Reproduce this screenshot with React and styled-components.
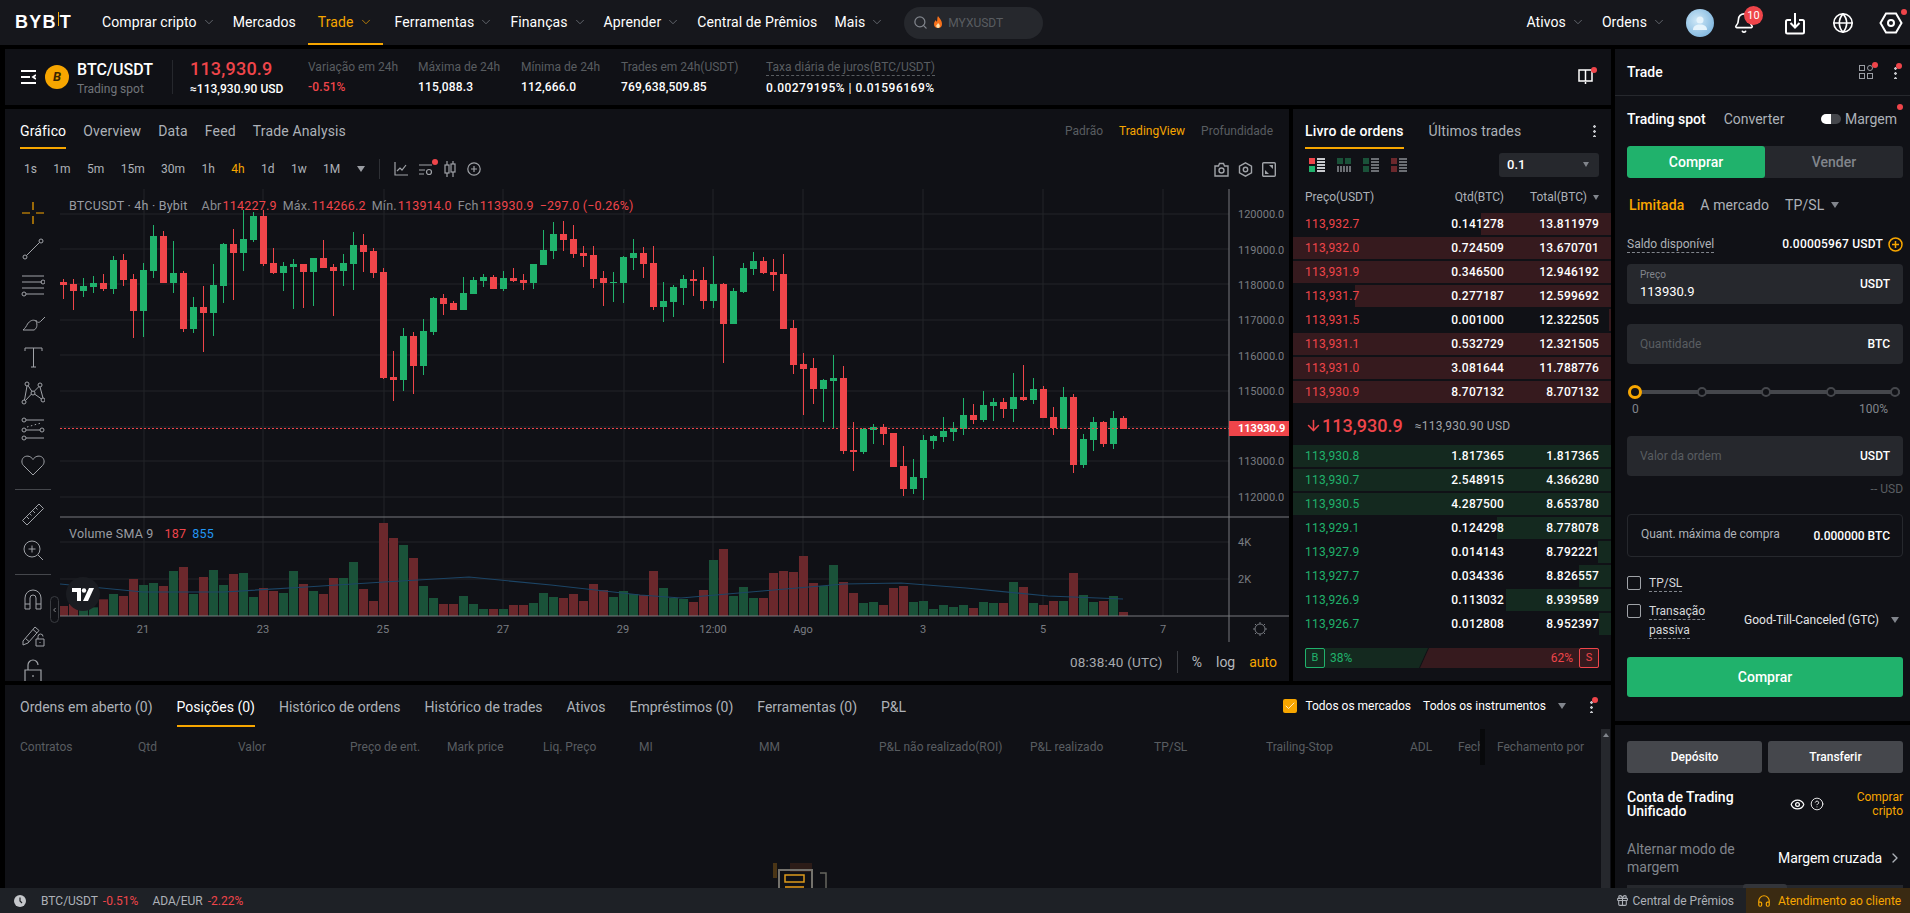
import styled, { createGlobalStyle } from "styled-components";
import { Search, Bell, Globe, Eye, CircleHelp, ChevronRight, Headphones, Gift, ChevronDown, ChevronLeft, Check, ArrowDown } from "lucide-react";

const GlobalStyle = createGlobalStyle`
  html, body {
    margin: 0;
    padding: 0;
    background: #000;
    overflow: hidden;
  }
  * {
    box-sizing: border-box;
  }
  body {
    font-family: "Roboto", "Liberation Sans", sans-serif;
    font-size: 12px;
    color: #fff;
  }
`;

// [up, bodyTop, bodyBottom, wickTop, wickBottom] read from the chart, y in 1/3 px from 180
const CANDLES = [
  [0, 305, 315, 297, 357], [0, 312, 332, 297, 390], [1, 318, 332, 294, 350], [1, 309, 321, 288, 338],
  [0, 309, 327, 282, 333], [1, 240, 327, 228, 342], [0, 240, 300, 222, 318], [0, 297, 393, 282, 474],
  [1, 270, 393, 250, 471], [1, 168, 273, 135, 294], [0, 168, 309, 153, 309], [1, 279, 309, 183, 339],
  [0, 279, 447, 273, 456], [1, 381, 447, 351, 459], [0, 381, 399, 318, 516], [1, 315, 399, 252, 468],
  [1, 192, 318, 189, 369], [0, 192, 219, 147, 360], [1, 177, 219, 90, 273], [1, 109, 180, 95, 186],
  [0, 109, 252, 90, 258], [0, 249, 279, 204, 282], [1, 258, 279, 246, 333], [1, 252, 261, 237, 387],
  [0, 252, 276, 252, 384], [1, 234, 276, 234, 378], [0, 234, 264, 180, 264], [0, 261, 273, 252, 408],
  [1, 249, 273, 222, 318], [1, 195, 252, 156, 330], [0, 195, 216, 162, 276], [0, 213, 279, 204, 294],
  [0, 276, 594, 264, 597], [0, 591, 600, 513, 663], [1, 468, 600, 444, 633], [0, 468, 558, 456, 642],
  [1, 453, 558, 417, 585], [1, 354, 456, 351, 465], [0, 354, 372, 342, 405], [0, 369, 390, 363, 390],
  [1, 339, 390, 291, 390], [1, 300, 342, 291, 342], [1, 291, 303, 282, 321], [0, 291, 327, 285, 327],
  [1, 294, 327, 273, 333], [0, 294, 303, 264, 306], [0, 300, 309, 282, 330], [1, 252, 309, 252, 327],
  [1, 210, 255, 150, 255], [1, 162, 213, 126, 237], [0, 162, 180, 123, 213], [0, 177, 222, 135, 234],
  [0, 219, 228, 198, 261], [0, 225, 297, 198, 324], [0, 294, 309, 273, 378], [1, 306, 309, 276, 366],
  [1, 231, 309, 228, 369], [1, 219, 234, 177, 270], [0, 219, 252, 201, 294], [0, 249, 381, 198, 390],
  [1, 363, 381, 306, 426], [1, 321, 366, 315, 411], [1, 297, 324, 285, 375], [0, 297, 303, 270, 348],
  [0, 300, 363, 261, 387], [1, 312, 363, 228, 384], [0, 312, 432, 309, 549], [1, 333, 432, 324, 432],
  [1, 264, 336, 249, 339], [1, 243, 267, 216, 285], [0, 243, 279, 231, 282], [0, 276, 285, 237, 333],
  [0, 282, 447, 222, 447], [0, 444, 555, 420, 582], [0, 552, 567, 519, 705], [0, 564, 627, 534, 672],
  [1, 600, 627, 597, 726], [1, 594, 603, 525, 744], [0, 594, 813, 558, 822], [0, 810, 816, 726, 873],
  [1, 747, 816, 744, 822], [1, 741, 750, 732, 792], [0, 741, 762, 732, 795], [0, 759, 861, 759, 861],
  [0, 858, 927, 798, 948], [1, 891, 927, 837, 942], [1, 780, 894, 765, 960], [1, 768, 783, 765, 807],
  [1, 753, 771, 711, 786], [1, 744, 756, 726, 783], [1, 705, 747, 654, 765], [0, 705, 720, 672, 732],
  [1, 675, 720, 633, 726], [1, 666, 678, 654, 723], [0, 666, 687, 654, 714], [1, 651, 687, 579, 726],
  [0, 651, 660, 555, 663], [1, 627, 660, 594, 672], [0, 627, 714, 618, 714], [0, 711, 744, 681, 765],
  [1, 651, 747, 621, 747], [0, 651, 855, 642, 879], [1, 777, 855, 762, 864], [1, 726, 780, 711, 813],
  [0, 726, 792, 723, 801], [1, 714, 792, 693, 807], [0, 714, 747, 708, 747],
];

const VOLUMES = [
  1278, 1272, 1290, 1282, 1258, 1242, 1248, 1197, 1215, 1209, 1218, 1173, 1161, 1242, 1191, 1170, 1215, 1182,
  1179, 1251, 1224, 1233, 1239, 1173, 1212, 1233, 1242, 1194, 1194, 1146, 1227, 1263, 1029, 1074, 1095, 1134,
  1218, 1254, 1272, 1272, 1248, 1272, 1287, 1287, 1287, 1275, 1275, 1269, 1239, 1251, 1254, 1242, 1263, 1212,
  1230, 1251, 1233, 1242, 1245, 1173, 1224, 1254, 1257, 1266, 1230, 1140, 1107, 1248, 1221, 1254, 1254, 1179,
  1173, 1176, 1128, 1209, 1218, 1155, 1206, 1239, 1269, 1266, 1275, 1224, 1218, 1266, 1263, 1287, 1275, 1281,
  1275, 1284, 1266, 1269, 1269, 1206, 1221, 1269, 1275, 1263, 1263, 1179, 1245, 1266, 1263, 1248, 1296,
];

const SMA_POINTS = "60,584 143,592 224,592 306,587 384,582 469,577 551,585 640,595 681,598 762,591 844,584 901,583 966,588 1048,596 1123,599";
const H_LINES = [214, 249, 284, 320, 355, 391, 427, 461, 497, 542, 579];
const V_LINES = [144, 263, 384, 503, 624, 713, 803, 923, 1043, 1163];
const PRICE_LABELS = [
  ["120000.0", 214], ["119000.0", 250], ["118000.0", 285], ["117000.0", 320],
  ["116000.0", 356], ["115000.0", 391], ["113000.0", 461], ["112000.0", 497],
];
const TIME_LABELS = [
  ["21", 143], ["23", 263], ["25", 383], ["27", 503], ["29", 623],
  ["12:00", 713], ["Ago", 803], ["3", 923], ["5", 1043], ["7", 1163],
];

const NAV = [
  ["Comprar cripto", true], ["Mercados", false], ["Trade", true, true], ["Ferramentas", true],
  ["Finanças", true], ["Aprender", true], ["Central de Prêmios", false], ["Mais", true],
];

const ASKS = [
  ["113,932.7", "0.141278", "13.811979", 41], ["113,932.0", "0.724509", "13.670701", 100],
  ["113,931.9", "0.346500", "12.946192", 100], ["113,931.7", "0.277187", "12.599692", 80.5],
  ["113,931.5", "0.001000", "12.322505", 0.6], ["113,931.1", "0.532729", "12.321505", 100],
  ["113,931.0", "3.081644", "11.788776", 100], ["113,930.9", "8.707132", "8.707132", 100],
];

const BIDS = [
  ["113,930.8", "1.817365", "1.817365", 100], ["113,930.7", "2.548915", "4.366280", 100],
  ["113,930.5", "4.287500", "8.653780", 100], ["113,929.1", "0.124298", "8.778078", 36],
  ["113,927.9", "0.014143", "8.792221", 4], ["113,927.7", "0.034336", "8.826557", 10],
  ["113,926.9", "0.113032", "8.939589", 33], ["113,926.7", "0.012808", "8.952397", 3.8],
];

const TIMEFRAMES = ["1s", "1m", "5m", "15m", "30m", "1h", "4h", "1d", "1w", "1M"];
const BOTTOM_TABS = [
  "Ordens em aberto (0)", "Posições (0)", "Histórico de ordens", "Histórico de trades",
  "Ativos", "Empréstimos (0)", "Ferramentas (0)", "P&L",
];
const COLUMNS = [
  "Contratos", "Qtd", "Valor", "Preço de ent.", "Mark price", "Liq. Preço", "MI", "MM",
  "P&L não realizado(ROI)", "P&L realizado", "TP/SL", "Trailing-Stop", "ADL", "Fech", "Fechamento por",
];

const cy = (z) => 180 + z / 3;

const PriceChart = () => (
  <ChartSvg viewBox="60 189 1229 454">
    {H_LINES.map((y) => (
      <line key={y} x1="60" x2="1229" y1={y} y2={y} stroke="#222429" />
    ))}
    {V_LINES.map((x) => (
      <line key={x} x1={x} x2={x} y1="189" y2="616" stroke="#222429" />
    ))}
    {VOLUMES.map((top, i) => (
      <rect
        key={i}
        x={59 + 10 * i}
        y={cy(top)}
        width="9"
        height={616 - cy(top)}
        fill={CANDLES[i][0] ? "#1a5239" : "#6b282c"}
      />
    ))}
    <polyline points={SMA_POINTS} fill="none" stroke="#1c4566" strokeWidth="1.200" />
    {CANDLES.map(([up, top, bottom, wickTop, wickBottom], i) => {
      const color = up ? "#20b26c" : "#ef454a";
      const x = 63 + 10 * i;
      return (
        <g key={i} shapeRendering="crispEdges">
          <rect x={x} y={cy(wickTop)} width="1" height={cy(wickBottom) - cy(wickTop)} fill={color} />
          <rect x={x - 3} y={cy(top)} width="7" height={Math.max(cy(bottom) - cy(top), 1)} fill={color} />
        </g>
      );
    })}
    <line x1="60" x2="1229" y1="428" y2="428" stroke="#ef454a" strokeDasharray="2 2" shapeRendering="crispEdges" />
    <line x1="60" x2="1289" y1="517" y2="517" stroke="#77797d" />
    <line x1="60" x2="1289" y1="616" y2="616" stroke="#77797d" />
    <line x1="1229" x2="1229" y1="189" y2="642" stroke="#77797d" />
    {PRICE_LABELS.map(([label, y]) => (
      <AxisText key={label} x="1238" y={y + 4}>{label}</AxisText>
    ))}
    <AxisText x="1238" y="546">4K</AxisText>
    <AxisText x="1238" y="583">2K</AxisText>
    {TIME_LABELS.map(([label, x]) => (
      <AxisText key={label} x={x} y="633" textAnchor="middle">{label}</AxisText>
    ))}
    <rect x="1229" y="421" width="60" height="15" fill="#ef454a" />
    <LastPriceText x="1238" y="432">113930.9</LastPriceText>
    <g fill="none" stroke="#777a80" transform="translate(1253 622)">
      <circle cx="7" cy="7" r="5" />
      <path d="M7 0v2M7 12v2M0 7h2M12 7h2M2 2l1.500 1.500M10.500 10.500L12 12M12 2l-1.500 1.500M3.500 10.500L2 12" />
    </g>
  </ChartSvg>
);

const Tool = ({ children, w = 24 }) => (
  <ToolSlot>
    <svg width={w} height="24" viewBox="0 0 24 24" fill="none" stroke="currentColor" strokeWidth="1">
      {children}
    </svg>
  </ToolSlot>
);

const LeftTools = () => (
  <ToolColumn>
    <ToolSlot $accent>
      <svg width="24" height="24" viewBox="0 0 24 24" fill="none" stroke="currentColor" strokeWidth="1.200">
        <path d="M12 1v8M12 15v8M1 12h8M15 12h8" />
      </svg>
    </ToolSlot>
    <Tool>
      <circle cx="4" cy="20" r="2" />
      <circle cx="20" cy="4" r="2" />
      <path d="M5.500 18.500L18.500 5.500" />
    </Tool>
    <Tool>
      <path d="M1 3h22M1 9h20M1 15h22M5 21h18" />
      <circle cx="22" cy="9" r="2" />
      <circle cx="3" cy="21" r="2" />
    </Tool>
    <Tool>
      <path d="M2 21h11c2.500-1 4-5 2-9-3-2-6.500 0-8.500 3-1 2-2.500 4.500-4.500 6z" />
      <path d="M15 11c.5 2.500 3 3 4.500 1.500L24 8" />
    </Tool>
    <Tool>
      <path d="M4 6V3h17v3M12.500 3v19M10 22h5" />
    </Tool>
    <Tool>
      <circle cx="6" cy="3" r="2" />
      <circle cx="19" cy="4" r="2" />
      <circle cx="3" cy="21" r="2" />
      <circle cx="22" cy="19" r="2" />
      <circle cx="12" cy="12" r="2" />
      <path d="M6 5l-2.500 14M7 4.500l4 6M18 5.500l-5 5M10.500 13l-6 6.500M13.500 13l7 5M19 6l3 11" />
    </Tool>
    <Tool>
      <circle cx="3" cy="3" r="2" />
      <circle cx="3" cy="13" r="2" />
      <circle cx="21" cy="13" r="2" />
      <circle cx="3" cy="21" r="2" />
      <path d="M5 3h18M5 13h14M5 21h18" />
      <path d="M6 10l14-4" strokeDasharray="1.500 2.500" />
    </Tool>
    <Tool>
      <path d="M12 22L2.500 12.500C0 10 .5 5.500 3.500 3.800c3-1.500 6.500-.5 8.500 2.700 2-3.200 5.500-4.200 8.500-2.700 3 1.700 3.500 6.200 1 8.700z" />
    </Tool>
    <ToolRule />
    <Tool>
      <path d="M1.500 18.500L18 2l4.500 4.500L6 23z" />
      <path d="M6 15l2 2M9 12l1.500 1.500M12 9l2 2M15 6l1.500 1.500" />
    </Tool>
    <Tool>
      <circle cx="11" cy="11" r="8" />
      <path d="M17 17l5 5M11 7.500v7M7.500 11h7" />
    </Tool>
    <ToolRule />
    <Tool>
      <path d="M4 22V11a8 8 0 0 1 16 0v11h-5V11a3 3 0 0 0-6 0v11zM4 17h5M15 17h5" />
    </Tool>
    <Tool>
      <path d="M2 18L14 4l4 3.500L7 20l-5 2zM12 6.500l4 3.500M4.500 15.500l3.500 3" />
      <path d="M15 16h8v7h-8zM17 16v-2.500a2.500 2.500 0 0 1 5 0M19 19v1" />
    </Tool>
    <Tool>
      <path d="M4 11h16v12H4zM7 11V6a5 5 0 0 1 10 0M12 16v2" strokeWidth="1.200" />
    </Tool>
  </ToolColumn>
);

const BookIcon = ({ top, bottom, lines = "#c8cace" }) => (
  <svg width="16" height="14" viewBox="0 0 16 14">
    <rect x="0" y="0" width="6" height="6" fill={top} />
    <rect x="0" y="8" width="6" height="6" fill={bottom} />
    {[0, 3, 6, 9, 12].map((y) => (
      <rect key={y} x="8" y={y} width="8" height="2" fill={lines} />
    ))}
  </svg>
);

const BookRow = ({ row, side }) => (
  <DepthRow>
    <DepthFill $side={side} style={{ width: `${row[3]}%` }} />
    <RowPrice $side={side}>{row[0]}</RowPrice>
    <RowNum>{row[1]}</RowNum>
    <RowNum>{row[2]}</RowNum>
  </DepthRow>
);

const OrderBook = () => (
  <BookPanel>
    <BookTabs>
      <Tab $active $strong>Livro de ordens</Tab>
      <Tab>Últimos trades</Tab>
      <DotsWrap $right="15px">
        <Dots />
      </DotsWrap>
    </BookTabs>
    <BookTools>
      <BookIcon top="#ef454a" bottom="#20b26c" />
      <svg width="14" height="14" viewBox="0 0 14 14">
        <rect x="0" y="0" width="6" height="6" fill="#1a5239" />
        <rect x="8" y="0" width="6" height="6" fill="#1a5239" />
        {[0, 3, 6, 9, 12].map((x) => (
          <rect key={x} x={x} y="8" width="2" height="6" fill="#6c6f74" />
        ))}
      </svg>
      <BookIcon top="#1a5239" bottom="#1a5239" lines="#6c6f74" />
      <BookIcon top="#6b282c" bottom="#6b282c" lines="#6c6f74" />
      <StepSelect>
        0.1
        <Caret $color="#81858c" />
      </StepSelect>
    </BookTools>
    <BookHead>
      <span>Preço(USDT)</span>
      <HeadRight>Qtd(BTC)</HeadRight>
      <HeadRight>
        Total(BTC)
        <Caret $color="#81858c" />
      </HeadRight>
    </BookHead>
    <RowStack>
      {ASKS.map((row) => (
        <BookRow key={row[0]} row={row} side="ask" />
      ))}
    </RowStack>
    <MidPrice>
      <MidValue>
        <ArrowDown size={17} strokeWidth={2.200} />
        113,930.9
      </MidValue>
      <MidFiat>≈113,930.90 USD</MidFiat>
    </MidPrice>
    <RowStack>
      {BIDS.map((row) => (
        <BookRow key={row[0]} row={row} side="bid" />
      ))}
    </RowStack>
    <RatioBar>
      <BuyShare>
        <SideBox $color="#20b26c">B</SideBox>
        38%
      </BuyShare>
      <SellShare>
        62%
        <SideBox $color="#ef454a">S</SideBox>
      </SellShare>
    </RatioBar>
  </BookPanel>
);

const TradeForm = () => (
  <TradePanel>
    <TradeHead>
      <b>Trade</b>
      <TradeHeadIcons>
        <DotBadge>
          <svg width="14" height="14" viewBox="0 0 14 14" fill="none" stroke="#9a9da3" strokeWidth="1">
            <rect x=".5" y=".5" width="5" height="5" />
            <circle cx="11" cy="3" r="2.500" />
            <rect x=".5" y="8.500" width="5" height="5" />
            <rect x="8.500" y="8.500" width="5" height="5" />
          </svg>
        </DotBadge>
        <DotBadge>
          <Dots />
        </DotBadge>
      </TradeHeadIcons>
    </TradeHead>
    <FormBody>
      <TradeTabs>
        <b>Trading spot</b>
        <ConvertTab>Converter</ConvertTab>
        <MarginWrap>
          <Toggle />
          <span>Margem</span>
          <RedDot />
        </MarginWrap>
      </TradeTabs>
      <SideSwitch>
        <SideButton $active>Comprar</SideButton>
        <SideButton>Vender</SideButton>
      </SideSwitch>
      <OrderTypes>
        <OrderType $active>Limitada</OrderType>
        <OrderType>A mercado</OrderType>
        <OrderType>TP/SL</OrderType>
        <Caret $color="#81858c" $big />
      </OrderTypes>
      <BalanceRow>
        <DashedText $color="#adb1b8">Saldo disponível</DashedText>
        <BalanceValue>
          0.00005967 USDT
          <svg width="15" height="15" viewBox="0 0 15 15" fill="none" stroke="#f7a600" strokeWidth="1.500">
            <circle cx="7.500" cy="7.500" r="6.500" />
            <path d="M7.500 4v7M4 7.500h7" />
          </svg>
        </BalanceValue>
      </BalanceRow>
      <InputBox $mt="10px">
        <InputStack>
          <InputLabel>Preço</InputLabel>
          <InputValue>113930.9</InputValue>
        </InputStack>
        <InputUnit>USDT</InputUnit>
      </InputBox>
      <InputBox $mt="20px">
        <Placeholder>Quantidade</Placeholder>
        <InputUnit>BTC</InputUnit>
      </InputBox>
      <SliderRow>
        <SliderThumb />
        <SliderStop />
        <SliderStop />
        <SliderStop />
        <SliderStop />
      </SliderRow>
      <SliderLabels>
        <span>0</span>
        <span>100%</span>
      </SliderLabels>
      <InputBox $mt="20px">
        <Placeholder>Valor da ordem</Placeholder>
        <InputUnit>USDT</InputUnit>
      </InputBox>
      <FiatHint>-- USD</FiatHint>
      <MaxBox>
        <MaxLabel>Quant. máxima de compra</MaxLabel>
        <MaxValue>0.000000 BTC</MaxValue>
      </MaxBox>
      <CheckRow>
        <CheckBox />
        <DashedText $color="#d5d7da">TP/SL</DashedText>
      </CheckRow>
      <PassiveRow>
        <CheckBox />
        <PassiveText>
          <DashedText $color="#d5d7da">Transação</DashedText>
          <DashedText $color="#d5d7da">passiva</DashedText>
        </PassiveText>
        <GtcSelect>
          Good-Till-Canceled (GTC)
          <Caret $color="#81858c" $big />
        </GtcSelect>
      </PassiveRow>
      <SubmitButton>Comprar</SubmitButton>
    </FormBody>
  </TradePanel>
);

const AccountCard = () => (
  <AccountPanel>
    <ActionRow>
      <ActionButton>Depósito</ActionButton>
      <ActionButton>Transferir</ActionButton>
    </ActionRow>
    <AccountHead>
      <AccountTitle>Conta de Trading Unificado</AccountTitle>
      <AccountIcons>
        <Eye size={15} strokeWidth={2} />
        <CircleHelp size={14} strokeWidth={1.500} />
      </AccountIcons>
      <BuyCrypto>Comprar cripto</BuyCrypto>
    </AccountHead>
    <MarginModeRow>
      <MarginLabel>Alternar modo de margem</MarginLabel>
      <MarginValue>
        Margem cruzada
        <ChevronRight size={16} color="#adb1b8" />
      </MarginValue>
    </MarginModeRow>
    <AccountFoot>
      <FootHandle />
    </AccountFoot>
  </AccountPanel>
);

const App = () => (
  <>
    <GlobalStyle />
    <Page>
      <TopBar>
        <Logo>
          BYB<LogoBar />T
        </Logo>
        <NavList>
          {NAV.map(([label, chevron, active]) => (
            <NavItem key={label} $active={active}>
              {label}
              {chevron && <ChevronDown size={14} strokeWidth={1.200} />}
            </NavItem>
          ))}
        </NavList>
        <SearchBox>
          <Search size={15} color="#81858c" />
          <svg width="10" height="13" viewBox="0 0 10 13">
            <path d="M5 0c1 2 4 4 4 8a4 4 0 0 1-8 0c0-2 1-3 2-4 0 1 .5 1.500 1 1.500C4.500 4 4 2 5 0z" fill="#f7711b" />
            <path d="M5 7c1 1 2 2 1.800 3.200A1.800 1.800 0 0 1 3.200 10C3.200 9 4.500 8.500 5 7z" fill="#fbe3b0" />
          </svg>
          <span>MYXUSDT</span>
        </SearchBox>
        <TopRight>
          <NavItem>
            Ativos
            <ChevronDown size={14} strokeWidth={1.200} />
          </NavItem>
          <NavItem>
            Ordens
            <ChevronDown size={14} strokeWidth={1.200} />
          </NavItem>
          <Avatar>
            <svg width="16" height="16" viewBox="0 0 16 16" fill="#e6f4fc">
              <circle cx="8" cy="5" r="3.500" />
              <path d="M1 15c0-4 3-5.500 7-5.500s7 1.500 7 5.500z" />
            </svg>
          </Avatar>
          <BellWrap>
            <Bell size={22} strokeWidth={1.800} />
            <BellCount>10</BellCount>
          </BellWrap>
          <TopIcon>
            <svg width="20" height="24" viewBox="0 0 20 24" fill="none" stroke="#fff" strokeWidth="2">
              <path d="M6 9H2.500A1.500 1.500 0 0 0 1 10.500V21a1.500 1.500 0 0 0 1.500 1.500h15A1.500 1.500 0 0 0 19 21V10.500A1.500 1.500 0 0 0 17.500 9H14M10 2v14M5.500 12l4.500 4.500 4.500-4.500" />
            </svg>
          </TopIcon>
          <TopIcon>
            <Globe size={22} strokeWidth={1.800} />
          </TopIcon>
          <TopIcon>
            <svg width="24" height="24" viewBox="0 0 24 24" fill="none" stroke="#fff" strokeWidth="2">
              <path d="M7 2.500h10l5.500 9.500-5.500 9.500H7L1.500 12z" />
              <circle cx="12" cy="12" r="3" />
            </svg>
            <RedDot />
          </TopIcon>
        </TopRight>
      </TopBar>
      <Workspace>
        <MainColumn>
          <TickerBar>
            <MenuGlyph>
              <svg width="15" height="14" viewBox="0 0 15 14" fill="none" stroke="#fff" strokeWidth="1.800">
                <path d="M0 1h15M0 7h9M0 13h15M15 5l-3 2 3 2" />
              </svg>
            </MenuGlyph>
            <Coin>B</Coin>
            <PairBlock>
              <PairName>BTC/USDT</PairName>
              <PairKind>Trading spot</PairKind>
            </PairBlock>
            <PriceBlock>
              <LastPrice>113,930.9</LastPrice>
              <FiatPrice>≈113,930.90 USD</FiatPrice>
            </PriceBlock>
            <Stat $w="110px">
              <StatLabel>Variação em 24h</StatLabel>
              <StatValue $down>-0.51%</StatValue>
            </Stat>
            <Stat $w="103px">
              <StatLabel>Máxima de 24h</StatLabel>
              <StatValue>115,088.3</StatValue>
            </Stat>
            <Stat $w="100px">
              <StatLabel>Mínima de 24h</StatLabel>
              <StatValue>112,666.0</StatValue>
            </Stat>
            <Stat $w="145px">
              <StatLabel>Trades em 24h(USDT)</StatLabel>
              <StatValue>769,638,509.85</StatValue>
            </Stat>
            <Stat $w="180px">
              <RateLabel>Taxa diária de juros(BTC/USDT)</RateLabel>
              <RateValue>0.00279195% | 0.01596169%</RateValue>
            </Stat>
            <LayoutToggle>
              <svg width="15" height="16" viewBox="0 0 15 16" fill="none" stroke="#fff" strokeWidth="1.500">
                <path d="M1 1h13v11H1zM7.500 1v11M7.500 13v2" />
              </svg>
              <RedDot />
            </LayoutToggle>
          </TickerBar>
          <MiddleRow>
            <ChartPanel>
              <PanelTabs>
                <Tab $active>Gráfico</Tab>
                <Tab>Overview</Tab>
                <Tab>Data</Tab>
                <Tab>Feed</Tab>
                <Tab>Trade Analysis</Tab>
                <ChartModes>
                  <span>Padrão</span>
                  <ModeActive>TradingView</ModeActive>
                  <span>Profundidade</span>
                </ChartModes>
              </PanelTabs>
              <TimeframeBar>
                {TIMEFRAMES.map((tf) => (
                  <Timeframe key={tf} $active={tf === "4h"}>
                    {tf}
                  </Timeframe>
                ))}
                <Caret $color="#9a9da3" $big />
                <TfRule />
                <TfIcons>
                  <svg width="14" height="16" viewBox="0 0 14 16" fill="none" stroke="#a0a3a8" strokeWidth="1.200">
                    <path d="M1 1v13h13M3 10l3-3 2 2 4-5" />
                  </svg>
                  <DotBadge>
                    <svg width="14" height="14" viewBox="0 0 14 14" fill="none" stroke="#a0a3a8" strokeWidth="1.200">
                      <path d="M0 3h13M0 8h6M0 12h5" />
                      <circle cx="10" cy="10" r="2.500" />
                    </svg>
                  </DotBadge>
                  <svg width="12" height="16" viewBox="0 0 12 16" fill="none" stroke="#a0a3a8" strokeWidth="1.200">
                    <path d="M3 0v16M9 0v16" />
                    <rect x="1" y="4" width="4" height="8" fill="#101116" />
                    <rect x="7" y="3" width="4" height="8" fill="#101116" />
                  </svg>
                  <svg width="14" height="14" viewBox="0 0 14 14" fill="none" stroke="#a0a3a8" strokeWidth="1.200">
                    <circle cx="7" cy="7" r="6.200" />
                    <path d="M7 4v6M4 7h6" />
                  </svg>
                </TfIcons>
                <TfRightIcons>
                  <svg width="15" height="15" viewBox="0 0 15 15" fill="none" stroke="#a0a3a8" strokeWidth="1.400">
                    <path d="M1 4h3.500l1-2.500h4l1 2.500H14v10H1z" />
                    <circle cx="7.500" cy="8.500" r="2.500" />
                  </svg>
                  <svg width="15" height="15" viewBox="0 0 15 15" fill="none" stroke="#a0a3a8" strokeWidth="1.400">
                    <path d="M7.500 .8l6 3.400v6.600l-6 3.400-6-3.400V4.200z" />
                    <circle cx="7.500" cy="7.500" r="2.200" />
                  </svg>
                  <svg width="14" height="15" viewBox="0 0 14 15">
                    <rect x=".7" y=".7" width="12.600" height="13.600" rx="1" fill="none" stroke="#a0a3a8" strokeWidth="1.400" />
                    <path d="M3 12V8l4 4zM11 3v4L7 3z" fill="#a0a3a8" />
                  </svg>
                </TfRightIcons>
              </TimeframeBar>
              <ChartBody>
                <LeftTools />
                <ChartArea>
                  <PriceChart />
                  <Legend>
                    <LegendTitle>BTCUSDT · 4h · Bybit</LegendTitle>
                    <LegendKey>Abr</LegendKey>
                    <LegendVal>114227.9</LegendVal>
                    <LegendKey>Máx.</LegendKey>
                    <LegendVal>114266.2</LegendVal>
                    <LegendKey>Mín.</LegendKey>
                    <LegendVal>113914.0</LegendVal>
                    <LegendKey>Fch</LegendKey>
                    <LegendVal>113930.9</LegendVal>
                    <LegendVal>−297.0 (−0.26%)</LegendVal>
                  </Legend>
                  <VolumeLegend>
                    <LegendTitle>Volume SMA 9</LegendTitle>
                    <LegendVal>187</LegendVal>
                    <SmaVal>855</SmaVal>
                  </VolumeLegend>
                  <TvBadge>
                    <svg width="22" height="13" viewBox="0 0 22 13" fill="#fff">
                      <path d="M0 0h9v13H5V4H0z" />
                      <circle cx="12" cy="2.500" r="2.200" />
                      <path d="M17 0h5l-6 13h-5z" />
                    </svg>
                  </TvBadge>
                  <CollapseTab>
                    <ChevronLeft size={10} color="#d5d7da" strokeWidth={2} />
                  </CollapseTab>
                </ChartArea>
              </ChartBody>
              <ChartFoot>
                <ClockText>08:38:40 (UTC)</ClockText>
                <FootRule />
                <FootOption>%</FootOption>
                <FootOption>log</FootOption>
                <FootOption $active>auto</FootOption>
              </ChartFoot>
            </ChartPanel>
            <OrderBook />
          </MiddleRow>
          <BottomPanel>
            <BottomTabs>
              {BOTTOM_TABS.map((label) => (
                <Tab key={label} $active={label === "Posições (0)"}>
                  {label}
                </Tab>
              ))}
              <BottomFilters>
                <OrangeCheck>
                  <Check size={12} color="#fff" strokeWidth={1.500} />
                </OrangeCheck>
                <FilterText>Todos os mercados</FilterText>
                <FilterText>Todos os instrumentos</FilterText>
                <Caret $color="#81858c" $big />
                <DotBadge $ml="16px">
                  <Dots />
                </DotBadge>
              </BottomFilters>
            </BottomTabs>
            <ColumnsRow>
              {COLUMNS.map((label, i) => (
                <ColumnCell key={i}>{label}</ColumnCell>
              ))}
            </ColumnsRow>
            <ColumnFade />
            <EmptyState>
              <svg width="54" height="26" viewBox="0 0 54 26" fill="none">
                <rect x="0" y="0" width="4" height="15" fill="#4a3516" />
                <rect x="17" y="0" width="22" height="9" fill="#2c1c18" />
                <path d="M6 26V7h33v19" stroke="#74726c" strokeWidth="2" />
                <rect x="12" y="12" width="19" height="7" stroke="#dd9a1c" strokeWidth="1.500" />
                <rect x="12" y="23" width="19" height="2" fill="#b57a16" />
                <path d="M47 10h6v16" stroke="#66665f" strokeWidth="1.500" />
              </svg>
            </EmptyState>
            <ScrollTrack>
              <ScrollArrow />
            </ScrollTrack>
          </BottomPanel>
        </MainColumn>
        <SideColumn>
          <TradeForm />
          <AccountCard />
        </SideColumn>
      </Workspace>
      <FooterBar>
        <svg width="12" height="12" viewBox="0 0 12 12">
          <circle cx="6" cy="6" r="6" fill="#c5c7cb" />
          <path d="M6 2.500V6l2 2" stroke="#1e2126" strokeWidth="1.200" fill="none" />
        </svg>
        <FooterPair>BTC/USDT</FooterPair>
        <FooterChange>-0.51%</FooterChange>
        <FooterPair $ml="14px">ADA/EUR</FooterPair>
        <FooterChange>-2.22%</FooterChange>
        <FooterRight>
          <RewardLink>
            <Gift size={13} />
            Central de Prêmios
          </RewardLink>
          <SupportLink>
            <Headphones size={14} />
            Atendimento ao cliente
          </SupportLink>
        </FooterRight>
      </FooterBar>
    </Page>
  </>
);

export default App;

const Page = styled.div`
  width: 1910px;
  height: 913px;
  display: flex;
  flex-direction: column;
  overflow: hidden;
  background: #000;
`;

const TopBar = styled.header`
  height: 45px;
  flex: none;
  display: flex;
  align-items: center;
  padding: 0 7px 0 15px;
  background: #16171c;
`;

const Logo = styled.div`
  width: 57px;
  display: flex;
  align-items: center;
  font-family: "Liberation Sans", sans-serif;
  font-size: 18px;
  font-weight: 700;
  letter-spacing: 1.200px;
  color: #fff;
`;

const LogoBar = styled.i`
  width: 3px;
  height: 14px;
  margin: -7px 2px 0 1px;
  background: #f7a600;
`;

const NavList = styled.nav`
  height: 45px;
  display: flex;
  margin-left: 25px;
`;

const NavItem = styled.div`
  display: flex;
  align-items: center;
  gap: 5px;
  height: 45px;
  margin-right: 7px;
  padding: 0 ${({ $active }) => ($active ? "10px" : "5px")};
  font-size: 14px;
  letter-spacing: 0.1px;
  color: ${({ $active }) => ($active ? "#f7a600" : "#fff")};
  border-bottom: 2px solid ${({ $active }) => ($active ? "#f7a600" : "transparent")};
  white-space: nowrap;
  svg {
    color: ${({ $active }) => ($active ? "#f7a600" : "#81858c")};
  }
`;

const SearchBox = styled.div`
  width: 139px;
  height: 32px;
  margin-left: 8px;
  display: flex;
  align-items: center;
  gap: 5px;
  padding-left: 9px;
  border-radius: 16px;
  background: #26282d;
  color: #595d61;
  font-size: 12px;
`;

const TopRight = styled.div`
  margin-left: auto;
  display: flex;
  align-items: center;
`;

const Avatar = styled.div`
  width: 28px;
  height: 28px;
  margin: 0 18px 0 8px;
  display: flex;
  align-items: center;
  justify-content: center;
  border-radius: 50%;
  background: radial-gradient(circle at 40% 40%, #cfe8f7, #6aa9d8);
`;

const BellWrap = styled.div`
  position: relative;
  width: 24px;
  display: flex;
  justify-content: center;
  margin-right: 27px;
`;

const BellCount = styled.span`
  position: absolute;
  top: -6px;
  left: 12px;
  width: 19px;
  height: 19px;
  line-height: 19px;
  border-radius: 50%;
  text-align: center;
  background: #ef454a;
  color: #fff;
  font-size: 11px;
`;

const TopIcon = styled.div`
  position: relative;
  width: 24px;
  height: 24px;
  margin-left: ${({ $ml }) => $ml || "0"};
  margin-right: 24px;
  display: flex;
  align-items: center;
  justify-content: center;
  &:last-child {
    margin-right: 0;
  }
`;

const RedDot = styled.i`
  position: absolute;
  top: -2px;
  right: -4px;
  width: 6px;
  height: 6px;
  border-radius: 50%;
  background: #ef454a;
`;

const Workspace = styled.main`
  flex: 1;
  min-height: 0;
  display: flex;
  gap: 4px;
  padding: 4px 0 0 5px;
`;

const MainColumn = styled.div`
  width: 1606px;
  display: flex;
  flex-direction: column;
  gap: 4px;
`;

const SideColumn = styled.aside`
  width: 295px;
  display: flex;
  flex-direction: column;
  gap: 4px;
`;

const TickerBar = styled.section`
  height: 56px;
  flex: none;
  display: flex;
  align-items: center;
  padding-left: 16px;
  background: #101116;
`;

const MenuGlyph = styled.div`
  width: 24px;
  display: flex;
`;

const Coin = styled.div`
  width: 24px;
  height: 24px;
  margin-right: 8px;
  border-radius: 50%;
  background: #f7a600;
  color: #3a2500;
  font-size: 13px;
  font-weight: 700;
  font-style: italic;
  text-align: center;
  line-height: 24px;
`;

const PairBlock = styled.div`
  width: 96px;
  height: 34px;
  display: flex;
  flex-direction: column;
  gap: 2px;
  border-right: 1px solid #26282d;
`;

const PairName = styled.div`
  font-size: 16px;
  line-height: 19px;
  font-weight: 500;
  color: #fff;
`;

const PairKind = styled.div`
  font-size: 12px;
  line-height: 16px;
  color: #71757a;
`;

const PriceBlock = styled.div`
  width: 135px;
  padding-left: 17px;
  display: flex;
  flex-direction: column;
  gap: 1px;
`;

const LastPrice = styled.div`
  font-size: 18px;
  line-height: 22px;
  font-weight: 500;
  letter-spacing: 0.2px;
  color: #ef454a;
`;

const FiatPrice = styled.div`
  font-size: 12px;
  line-height: 16px;
  font-weight: 500;
  color: #fff;
  white-space: nowrap;
`;

const Stat = styled.div`
  width: ${({ $w }) => $w};
  display: flex;
  flex-direction: column;
  gap: 4px;
  white-space: nowrap;
`;

const StatLabel = styled.div`
  line-height: 16px;
  color: #595d61;
`;

const RateLabel = styled(StatLabel)`
  align-self: flex-start;
  border-bottom: 1px dashed #595d61;
`;

const StatValue = styled.div`
  line-height: 16px;
  font-weight: 500;
  letter-spacing: 0.15px;
  color: ${({ $down }) => ($down ? "#ef454a" : "#fff")};
`;

const RateValue = styled(StatValue)`
  letter-spacing: 0.5px;
`;

const LayoutToggle = styled.div`
  position: relative;
  margin-left: auto;
  margin-right: 18px;
  display: flex;
`;

const MiddleRow = styled.div`
  height: 572px;
  flex: none;
  display: flex;
  gap: 4px;
`;

const ChartPanel = styled.section`
  width: 1284px;
  display: flex;
  flex-direction: column;
  background: #101116;
`;

const PanelTabs = styled.div`
  height: 40px;
  flex: none;
  display: flex;
  gap: 17px;
  padding: 0 16px 0 15px;
`;

const Tab = styled.div`
  height: 40px;
  padding-top: 13px;
  font-size: 14px;
  line-height: 18px;
  letter-spacing: 0.15px;
  font-weight: ${({ $strong }) => ($strong ? 500 : 400)};
  color: ${({ $active }) => ($active ? "#fff" : "#adb1b8")};
  border-bottom: 2px solid ${({ $active }) => ($active ? "#f7a600" : "transparent")};
  white-space: nowrap;
`;

const ChartModes = styled.div`
  margin-left: auto;
  display: flex;
  gap: 16px;
  padding-top: 15px;
  color: #595d61;
`;

const ModeActive = styled.span`
  color: #f7a600;
`;

const TimeframeBar = styled.div`
  height: 40px;
  flex: none;
  display: flex;
  align-items: center;
  padding: 0 13px 0 19px;
  gap: 16.400px;
  font-size: 12px;
`;

const Timeframe = styled.span`
  color: ${({ $active }) => ($active ? "#f7a600" : "#adb1b8")};
`;

const TfRule = styled.i`
  width: 1px;
  height: 20px;
  margin-left: -2px;
  background: #2e3035;
`;

const TfIcons = styled.div`
  display: flex;
  align-items: center;
  gap: 11px;
  margin-left: -2px;
`;

const TfRightIcons = styled.div`
  margin-left: auto;
  display: flex;
  align-items: center;
  gap: 9px;
`;

const ChartBody = styled.div`
  height: 454px;
  flex: none;
  display: flex;
`;

const ToolColumn = styled.div`
  width: 55px;
  flex: none;
  height: 492px;
  padding-top: 6px;
  display: flex;
  flex-direction: column;
  align-items: center;
  overflow: hidden;
`;

const ToolSlot = styled.div`
  width: 100%;
  height: 36px;
  flex: none;
  display: flex;
  align-items: center;
  justify-content: center;
  color: ${({ $accent }) => ($accent ? "#f7a600" : "#a0a3a8")};
`;

const ToolRule = styled.i`
  width: 36px;
  height: 1px;
  flex: none;
  margin: 6px 0;
  background: #45474c;
`;

const ChartArea = styled.div`
  position: relative;
  flex: 1;
`;

const ChartSvg = styled.svg`
  display: block;
  width: 1229px;
  height: 454px;
`;

const AxisText = styled.text`
  font-family: "Roboto", sans-serif;
  font-size: 11px;
  fill: #7a7d82;
`;

const LastPriceText = styled.text`
  font-family: "Roboto", sans-serif;
  font-size: 11px;
  font-weight: 700;
  fill: #fff;
`;

const Legend = styled.div`
  position: absolute;
  top: 9px;
  left: 9px;
  display: flex;
  align-items: center;
  font-size: 12.500px;
  line-height: 16px;
  white-space: nowrap;
  letter-spacing: 0.2px;
`;

const VolumeLegend = styled(Legend)`
  top: 337px;
  gap: 11px;
`;

const LegendTitle = styled.span`
  color: #9a9da3;
  margin-right: 14px;
  ${VolumeLegend} & {
    margin-right: 0;
  }
`;

const LegendKey = styled.span`
  color: #8a8d92;
  margin-right: 1px;
`;

const LegendVal = styled.span`
  color: #ef454a;
  margin-right: 6px;
  ${VolumeLegend} & {
    margin-right: -5px;
  }
`;

const SmaVal = styled.span`
  color: #2196f3;
`;

const TvBadge = styled.div`
  position: absolute;
  left: 6px;
  top: 388px;
  width: 34px;
  height: 34px;
  border-radius: 50%;
  display: flex;
  align-items: center;
  justify-content: center;
  background: #1a1c21;
`;

const CollapseTab = styled.div`
  position: absolute;
  left: -10px;
  top: 407px;
  width: 9px;
  height: 27px;
  border: 1px solid #3a3c41;
  border-radius: 5px;
  display: flex;
  align-items: center;
  justify-content: center;
  background: #101116;
`;

const ChartFoot = styled.div`
  height: 38px;
  flex: none;
  display: flex;
  align-items: center;
  justify-content: flex-end;
  padding-right: 12px;
  gap: 14px;
`;

const ClockText = styled.span`
  font-size: 13.500px;
  letter-spacing: 0.2px;
  color: #a6a9ae;
`;

const FootRule = styled.i`
  width: 1px;
  height: 22px;
  background: #3a3c41;
`;

const FootOption = styled.span`
  font-size: 14px;
  color: ${({ $active }) => ($active ? "#f7a600" : "#b4b7bb")};
`;

const BookPanel = styled.section`
  width: 318px;
  display: flex;
  flex-direction: column;
  background: #101116;
`;

const BookTabs = styled.div`
  position: relative;
  height: 40px;
  flex: none;
  display: flex;
  gap: 25px;
  padding-left: 12px;
`;

const DotsWrap = styled.div`
  position: absolute;
  top: 15px;
  right: ${({ $right }) => $right};
`;

const Dots = styled.i`
  display: block;
  width: 3px;
  height: 13px;
  background: radial-gradient(circle, #c4c6ca 1.200px, transparent 1.500px) 0 0 / 3px 5px repeat-y;
`;

const BookTools = styled.div`
  height: 35px;
  flex: none;
  display: flex;
  align-items: center;
  gap: 12px;
  padding: 0 12px 4px 16px;
`;

const StepSelect = styled.div`
  margin-left: auto;
  width: 100px;
  height: 24px;
  display: flex;
  align-items: center;
  justify-content: space-between;
  padding: 0 10px 0 8px;
  border-radius: 3px;
  background: #26282d;
  font-size: 13px;
  font-weight: 500;
`;

const Caret = styled.i`
  display: inline-block;
  width: 0;
  height: 0;
  border-left: ${({ $big }) => ($big ? "4.500px" : "3.500px")} solid transparent;
  border-right: ${({ $big }) => ($big ? "4.500px" : "3.500px")} solid transparent;
  border-top: ${({ $big }) => ($big ? "6px" : "5px")} solid ${({ $color }) => $color};
`;

const BookHead = styled.div`
  height: 26px;
  margin-bottom: 3px;
  flex: none;
  display: grid;
  grid-template-columns: 1fr 100px 95px;
  align-items: center;
  padding: 0 12px;
  color: #adb1b8;
`;

const HeadRight = styled.span`
  display: flex;
  align-items: center;
  justify-content: flex-end;
  gap: 6px;
`;

const RowStack = styled.div`
  display: flex;
  flex-direction: column;
  gap: 2px;
  flex: none;
`;

const DepthRow = styled.div`
  position: relative;
  height: 22px;
  display: grid;
  grid-template-columns: 1fr 100px 95px;
  align-items: center;
  padding: 0 12px;
`;

const DepthFill = styled.i`
  position: absolute;
  top: 0;
  right: 0;
  bottom: 0;
  background: ${({ $side }) => ($side === "ask" ? "#361a1e" : "#14291f")};
`;

const RowPrice = styled.span`
  position: relative;
  letter-spacing: 0.2px;
  color: ${({ $side }) => ($side === "ask" ? "#ef454a" : "#20b26c")};
`;

const RowNum = styled.span`
  position: relative;
  text-align: right;
  letter-spacing: 0.2px;
  font-weight: 500;
  color: #fff;
`;

const MidPrice = styled.div`
  height: 42px;
  flex: none;
  padding: 3px 0 0 12px;
  display: flex;
  align-items: center;
  gap: 12px;
`;

const MidValue = styled.span`
  display: flex;
  align-items: center;
  font-size: 18px;
  font-weight: 500;
  color: #ef454a;
`;

const MidFiat = styled.span`
  letter-spacing: 0.25px;
  color: #a0a3a8;
`;

const RatioBar = styled.div`
  height: 20px;
  margin: 13px 12px 0;
  flex: none;
  display: flex;
`;

const BuyShare = styled.div`
  width: 123px;
  display: flex;
  align-items: center;
  gap: 5px;
  background: #14291f;
  color: #20b26c;
  clip-path: polygon(0 0, 100% 0, calc(100% - 9px) 100%, 0 100%);
`;

const SellShare = styled.div`
  flex: 1;
  margin-left: -8px;
  display: flex;
  align-items: center;
  justify-content: flex-end;
  gap: 6px;
  background: #361a1e;
  color: #ef454a;
  clip-path: polygon(9px 0, 100% 0, 100% 100%, 0 100%);
`;

const SideBox = styled.span`
  width: 20px;
  height: 20px;
  border: 1px solid ${({ $color }) => $color};
  border-radius: 2px;
  text-align: center;
  line-height: 18px;
  font-size: 11px;
  color: ${({ $color }) => $color};
`;

const BottomPanel = styled.section`
  position: relative;
  flex: 1;
  min-height: 0;
  display: flex;
  flex-direction: column;
  background: #101116;
`;

const BottomTabs = styled.div`
  height: 42px;
  flex: none;
  display: flex;
  gap: 24px;
  padding-left: 15px;
  ${Tab} {
    height: 42px;
    padding-top: 13px;
    letter-spacing: 0;
  }
`;

const BottomFilters = styled.div`
  margin-left: auto;
  padding-right: 18px;
  display: flex;
  align-items: center;
  gap: 8px;
`;

const OrangeCheck = styled.div`
  width: 14px;
  height: 14px;
  border-radius: 2px;
  display: flex;
  align-items: center;
  justify-content: center;
  background: #f7a600;
`;

const FilterText = styled.span`
  margin-right: 4px;
  color: #fff;
`;

const DotBadge = styled.div`
  position: relative;
  display: flex;
  margin-left: ${({ $ml }) => $ml || "0"};
  &::after {
    content: "";
    position: absolute;
    top: -3px;
    right: -5px;
    width: 6px;
    height: 6px;
    border-radius: 50%;
    background: #ef454a;
  }
`;

const ColumnsRow = styled.div`
  height: 16px;
  margin-top: 12px;
  flex: none;
  display: grid;
  grid-template-columns: 118px 100px 112px 97px 96px 96px 120px 120px 151px 124px 112px 144px 48px 39px 100px;
  padding-left: 15px;
  line-height: 16px;
  color: #595d61;
  white-space: nowrap;
`;

const ColumnCell = styled.span``;

const ColumnFade = styled.i`
  position: absolute;
  top: 44px;
  left: 1475px;
  width: 5px;
  height: 36px;
  background: #08090b;
`;

const EmptyState = styled.div`
  flex: 1;
  padding: 108px 16px 0 0;
  display: flex;
  justify-content: center;
  overflow: hidden;
`;

const ScrollTrack = styled.div`
  position: absolute;
  top: 44px;
  right: 1px;
  bottom: 0;
  width: 9px;
  background: #26282d;
`;

const ScrollArrow = styled.i`
  display: block;
  width: 0;
  height: 0;
  margin: 4px auto 0;
  border-left: 3px solid transparent;
  border-right: 3px solid transparent;
  border-bottom: 4px solid #81858c;
`;

const TradePanel = styled.section`
  height: 672px;
  flex: none;
  background: #101116;
`;

const TradeHead = styled.div`
  height: 47px;
  display: flex;
  align-items: center;
  justify-content: space-between;
  padding: 0 13px 0 12px;
  border-bottom: 1px solid #26282d;
  font-size: 14px;
  b {
    font-weight: 500;
  }
`;

const TradeHeadIcons = styled.div`
  display: flex;
  align-items: center;
  gap: 21px;
`;

const FormBody = styled.div`
  padding: 0 7px 0 12px;
`;

const TradeTabs = styled.div`
  height: 46px;
  display: flex;
  align-items: center;
  gap: 16px;
  font-size: 14px;
  color: #adb1b8;
  b {
    font-weight: 500;
    color: #fff;
  }
`;

const ConvertTab = styled.span`
  margin-left: 2px;
`;

const MarginWrap = styled.div`
  position: relative;
  margin-left: auto;
  margin-right: 6px;
  display: flex;
  align-items: center;
  gap: 4px;
  ${RedDot} {
    top: -7px;
    right: -6px;
  }
`;

const Toggle = styled.i`
  width: 20px;
  height: 10px;
  border-radius: 5px;
  background: linear-gradient(90deg, #fff 50%, #45474c 50%);
`;

const SideSwitch = styled.div`
  margin-top: 4px;
  height: 32px;
  display: grid;
  grid-template-columns: 138px 1fr;
  border-radius: 3px;
  overflow: hidden;
  background: #26282d;
`;

const SideButton = styled.div`
  display: flex;
  align-items: center;
  justify-content: center;
  font-size: 14px;
  font-weight: 500;
  border-radius: 3px;
  background: ${({ $active }) => ($active ? "#20b26c" : "transparent")};
  color: ${({ $active }) => ($active ? "#fff" : "#81858c")};
`;

const OrderTypes = styled.div`
  margin-top: 15px;
  height: 24px;
  display: flex;
  align-items: center;
  gap: 16px;
  padding-left: 2px;
  letter-spacing: 0.1px;
  ${Caret} {
    margin-left: -9px;
  }
`;

const OrderType = styled.span`
  font-size: 14px;
  font-weight: ${({ $active }) => ($active ? 500 : 400)};
  color: ${({ $active }) => ($active ? "#f7a600" : "#adb1b8")};
`;

const BalanceRow = styled.div`
  margin-top: 17px;
  height: 20px;
  display: flex;
  align-items: center;
  justify-content: space-between;
`;

const DashedText = styled.span`
  padding-top: 2px;
  color: ${({ $color }) => $color};
  border-bottom: 1px dashed #81858c;
  line-height: 15px;
`;

const BalanceValue = styled.div`
  display: flex;
  align-items: center;
  gap: 5px;
  font-weight: 500;
  letter-spacing: 0.2px;
`;

const InputBox = styled.div`
  height: 40px;
  margin-top: ${({ $mt }) => $mt};
  display: flex;
  align-items: center;
  justify-content: space-between;
  padding: 0 13px;
  border-radius: 4px;
  background: #26282d;
`;

const InputStack = styled.div`
  display: flex;
  flex-direction: column;
  gap: 3px;
`;

const InputLabel = styled.span`
  font-size: 10px;
  line-height: 12px;
  color: #81858c;
`;

const InputValue = styled.span`
  font-size: 13px;
  line-height: 15px;
  color: #fff;
`;

const InputUnit = styled.span`
  font-weight: 500;
  color: #fff;
`;

const Placeholder = styled.span`
  color: #595d61;
`;

const SliderRow = styled.div`
  position: relative;
  height: 14px;
  margin: 21px 3px 0 1px;
  display: flex;
  align-items: center;
  justify-content: space-between;
  &::before {
    content: "";
    position: absolute;
    left: 0;
    right: 0;
    top: 5px;
    height: 4px;
    background: #45474c;
  }
`;

const SliderThumb = styled.i`
  position: relative;
  width: 14px;
  height: 14px;
  border: 3px solid #f7a600;
  border-radius: 50%;
  background: #101116;
`;

const SliderStop = styled.i`
  position: relative;
  width: 10px;
  height: 10px;
  border: 2px solid #45474c;
  border-radius: 50%;
  background: #101116;
`;

const SliderLabels = styled.div`
  height: 14px;
  margin-top: 3px;
  display: flex;
  justify-content: space-between;
  padding: 0 15px 0 5px;
  line-height: 14px;
  color: #81858c;
`;

const FiatHint = styled.div`
  margin-top: 6px;
  height: 14px;
  line-height: 14px;
  text-align: right;
  color: #595d61;
`;

const MaxBox = styled.div`
  height: 43px;
  margin-top: 18px;
  display: flex;
  align-items: center;
  justify-content: space-between;
  padding: 0 12px 0 13px;
  border: 1px solid #26282d;
  border-radius: 4px;
  color: #adb1b8;
`;

const MaxLabel = styled.span`
  margin-top: -4px;
  letter-spacing: -0.1px;
`;

const MaxValue = styled.span`
  font-weight: 500;
  color: #fff;
`;

const CheckRow = styled.div`
  height: 18px;
  margin-top: 17px;
  display: flex;
  align-items: center;
  gap: 8px;
`;

const CheckBox = styled.i`
  width: 14px;
  height: 14px;
  flex: none;
  border: 1px solid #a0a3a8;
  border-radius: 2px;
`;

const PassiveRow = styled.div`
  height: 36px;
  margin-top: 10px;
  display: flex;
  align-items: flex-start;
  gap: 8px;
  ${CheckBox} {
    margin-top: 2px;
  }
`;

const PassiveText = styled.div`
  display: flex;
  flex-direction: column;
  gap: 1px;
  ${DashedText} {
    align-self: flex-start;
  }
`;

const GtcSelect = styled.div`
  margin-left: auto;
  margin-right: 4px;
  height: 36px;
  display: flex;
  align-items: center;
  gap: 12px;
  color: #e6e7e9;
`;

const SubmitButton = styled.div`
  height: 40px;
  margin-top: 19px;
  display: flex;
  align-items: center;
  justify-content: center;
  border-radius: 3px;
  background: #20b26c;
  font-size: 14px;
  font-weight: 500;
`;

const AccountPanel = styled.section`
  flex: 1;
  min-height: 0;
  padding: 16px 7px 0 12px;
  background: #101116;
`;

const ActionRow = styled.div`
  display: grid;
  grid-template-columns: 135px 135px;
  gap: 6px;
`;

const ActionButton = styled.div`
  height: 32px;
  display: flex;
  align-items: center;
  justify-content: center;
  border-radius: 3px;
  background: #45474c;
  font-weight: 500;
`;

const AccountHead = styled.div`
  height: 28px;
  margin-top: 17px;
  display: flex;
  align-items: center;
`;

const AccountTitle = styled.div`
  width: 118px;
  font-size: 14px;
  line-height: 14px;
  font-weight: 500;
`;

const AccountIcons = styled.div`
  display: flex;
  align-items: center;
  gap: 5px;
  margin-left: 45px;
`;

const BuyCrypto = styled.div`
  width: 60px;
  margin-left: auto;
  line-height: 14px;
  text-align: right;
  color: #f7a600;
`;

const MarginModeRow = styled.div`
  height: 36px;
  margin-top: 22px;
  display: flex;
  align-items: center;
  justify-content: space-between;
`;

const MarginLabel = styled.div`
  width: 120px;
  font-size: 14px;
  line-height: 18px;
  color: #81858c;
`;

const MarginValue = styled.div`
  display: flex;
  align-items: center;
  gap: 5px;
  font-size: 14px;
  letter-spacing: -0.1px;
`;

const AccountFoot = styled.div`
  position: relative;
  height: 3px;
  margin-top: 9px;
  background: #26282d;
`;

const FootHandle = styled.i`
  position: absolute;
  left: 116px;
  top: -1px;
  width: 44px;
  height: 4px;
  border-radius: 3px 3px 0 0;
  background: #33353a;
`;

const FooterBar = styled.footer`
  height: 25px;
  flex: none;
  display: flex;
  align-items: center;
  padding-left: 14px;
  background: #1e2126;
`;

const FooterPair = styled.span`
  margin-left: ${({ $ml }) => $ml || "15px"};
  color: #adb1b8;
`;

const FooterChange = styled.span`
  margin-left: 5px;
  color: #ef454a;
`;

const FooterRight = styled.div`
  margin-left: auto;
  height: 25px;
  display: flex;
  align-items: center;
`;

const RewardLink = styled.div`
  display: flex;
  align-items: center;
  gap: 4px;
  margin-right: 12px;
  color: #adb1b8;
`;

const SupportLink = styled.div`
  width: 164px;
  height: 25px;
  display: flex;
  align-items: center;
  gap: 7px;
  padding-left: 11px;
  background: #3a2a12;
  color: #f7a600;
  white-space: nowrap;
`;
